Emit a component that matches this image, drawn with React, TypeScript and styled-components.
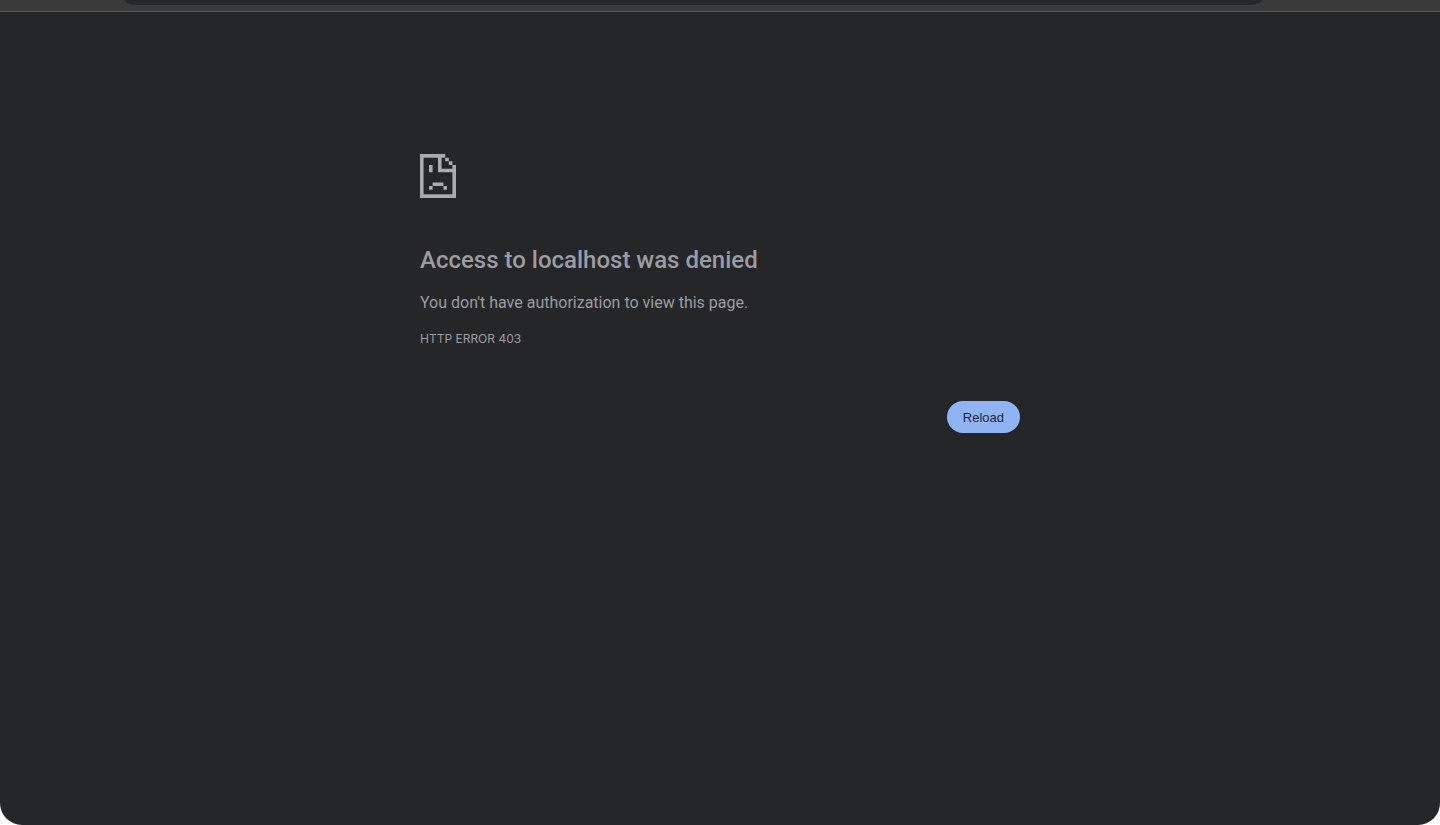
import React from "react";
import styled, { createGlobalStyle } from "styled-components";

const GlobalStyle = createGlobalStyle`
  *, *::before, *::after { box-sizing: border-box; }
  body { margin: 0; background: #ffffff; font-family: Inter, "Liberation Sans", sans-serif; }
  h1, p { margin: 0; }
`;

const Window = styled.div`
  display: flex;
  flex-direction: column;
  min-height: 100vh;
  overflow: hidden;
  background: #252628;
  border-radius: 0 0 22px 22px;
`;

const Toolbar = styled.header`
  height: 12px;
  padding: 0 178px 0 125px;
  background: #3a3a3a;
  border-bottom: 1px solid #5c5a59;
`;

const AddressBar = styled.div`
  height: 5px;
  background: #272829;
  border-radius: 0 0 12px 12px / 0 0 5px 5px;
`;

const ErrorPage = styled.main`
  width: 100%;
  max-width: 600px;
  margin: 0 auto;
  padding-top: 142px;
  color: #9b9da3;
`;

const SadPage = styled.svg`
  display: block;
  width: 36px;
  height: 44px;
  fill: #a9acab;
`;

const Heading = styled.h1`
  margin-top: 46px;
  font-family: Roboto, "Liberation Sans", sans-serif;
  font-size: 24px;
  font-weight: 500;
  line-height: 32px;
`;

const Message = styled.p`
  margin-top: 15px;
  font-family: Roboto, "Liberation Sans", sans-serif;
  font-size: 16px;
  line-height: 24px;
`;

const ErrorCode = styled.p`
  margin-top: 14px;
  font-size: 12px;
  line-height: 20px;
`;

const Actions = styled.div`
  display: flex;
  justify-content: flex-end;
  margin-top: 52px;
`;

const ReloadButton = styled.button`
  height: 32px;
  padding: 0 16px;
  border: 0;
  border-radius: 16px;
  background: #8fb3f3;
  color: #24272c;
  font: 13px "Liberation Sans", Arial, sans-serif;
  cursor: pointer;
`;

export default function App() {
  return (
    <Window>
      <GlobalStyle />
      <Toolbar>
        <AddressBar />
      </Toolbar>
      <ErrorPage>
        <SadPage viewBox="0 0 40 48" preserveAspectRatio="none" aria-hidden="true">
          <path d="M0 0H28V4H24V16H40V48H0ZM4 4V44H36V20H20V4ZM28 4H32V8H28ZM32 8H36V12H32ZM36 12H40V16H36ZM10 12H14V20H10ZM14 31H26V35H14ZM10 35H14V39H10ZM26 35H30V39H26Z" fillRule="evenodd" />
        </SadPage>
        <Heading>Access to localhost was denied</Heading>
        <Message>You don't have authorization to view this page.</Message>
        <ErrorCode>HTTP ERROR 403</ErrorCode>
        <Actions>
          <ReloadButton type="button" onClick={() => window.location.reload()}>
            Reload
          </ReloadButton>
        </Actions>
      </ErrorPage>
    </Window>
  );
}
